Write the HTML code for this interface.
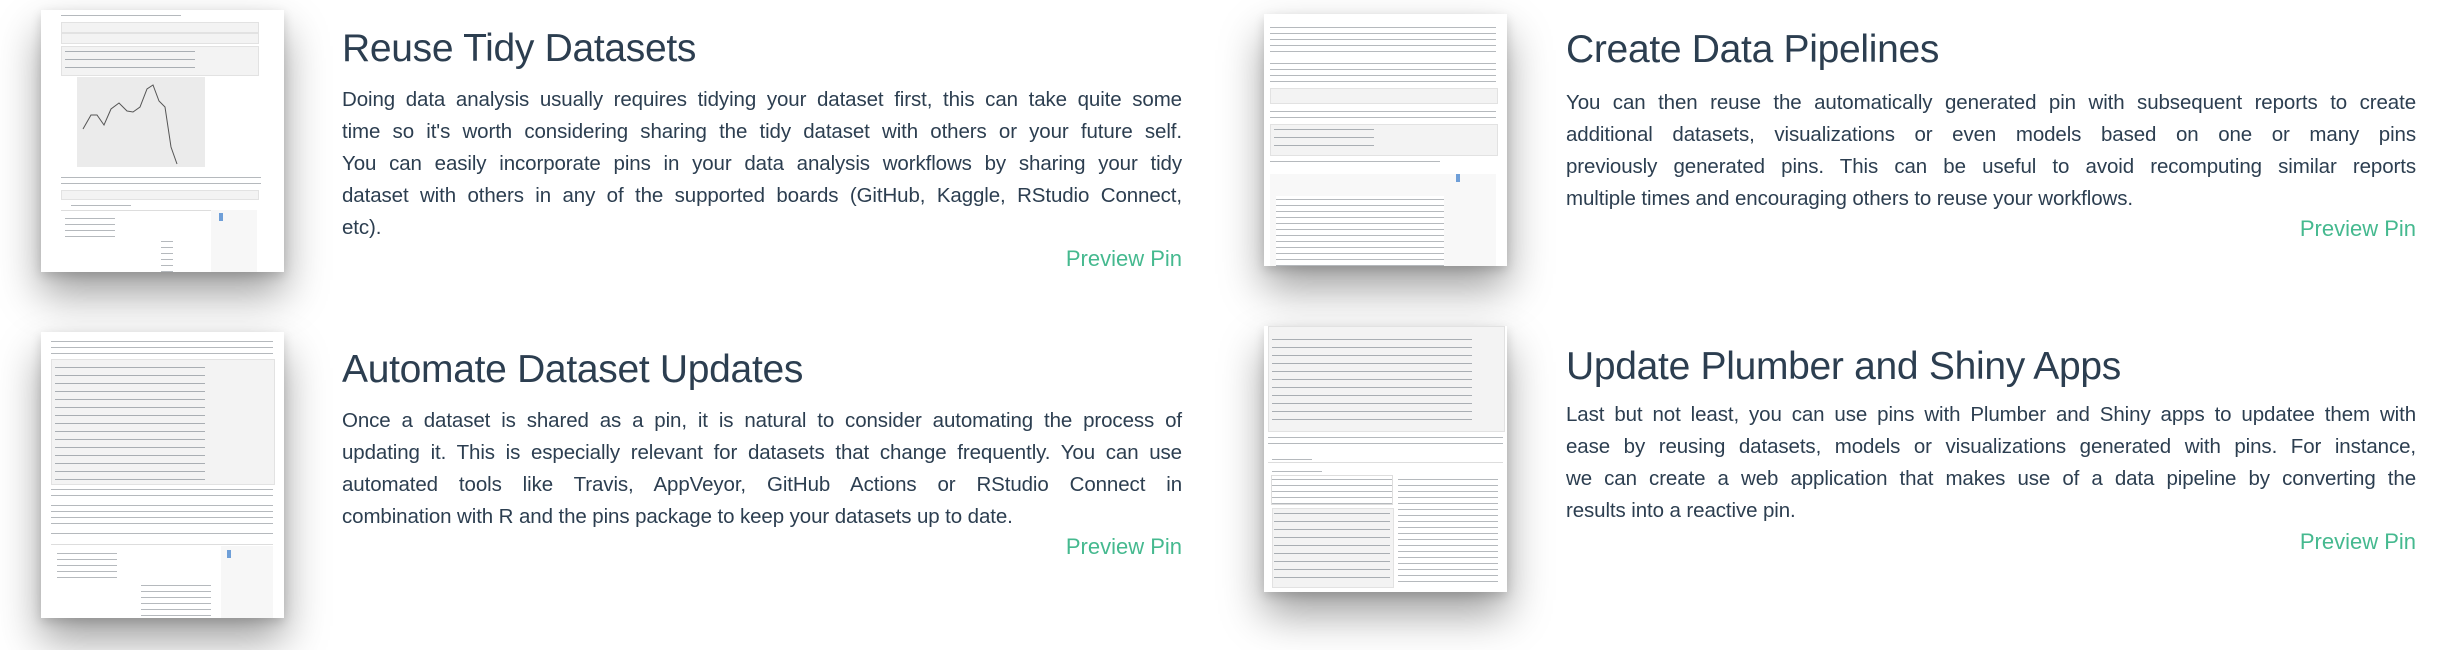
<!DOCTYPE html>
<html><head><meta charset="utf-8"><style>
body{margin:0;width:2461px;height:650px;background:#fff;position:relative;overflow:hidden;font-family:"Liberation Sans",sans-serif;color:#2c3e50}
.shot{position:absolute;background:#fff;box-shadow:0 22px 40px rgba(0,0,0,.38),0 4px 10px rgba(0,0,0,.15);overflow:hidden}
.code{position:absolute;background:#f3f3f3;border:1px solid #e2e2e2}
.lines{position:absolute;background:repeating-linear-gradient(#fff 0 3px,#b5b9bd 3px 4px,#fff 4px 6px)}
.lines2{position:absolute;background:repeating-linear-gradient(#f3f3f3 0 3px,#a9aeb3 3px 4px,#f3f3f3 4px 8px)}
h2{position:absolute;margin:0;font-weight:normal;font-size:39px;line-height:46px;white-space:nowrap;letter-spacing:-0.3px}
.p{position:absolute;font-size:20.5px;line-height:32px;letter-spacing:-0.1px}
.p div{text-align:justify;text-align-last:justify;white-space:nowrap}
.p div.l{text-align-last:left}
.pv{position:absolute;font-size:22px;color:#45b98f;white-space:nowrap;text-align:right}
</style></head><body>

<div class="shot" style="left:41px;top:10px;width:243px;height:262px">
  <div class="lines" style="left:20px;top:2px;width:120px;height:6px"></div>
  <div class="code" style="left:20px;top:12px;width:196px;height:9px"></div>
  <div class="code" style="left:20px;top:23px;width:196px;height:9px"></div>
  <div class="code" style="left:20px;top:36px;width:196px;height:28px"></div>
  <div class="lines2" style="left:24px;top:38px;width:130px;height:24px"></div>
  <div style="position:absolute;left:36px;top:67px;width:128px;height:90px;background:#ebebeb"></div>
  <svg style="position:absolute;left:36px;top:67px" width="128" height="90"><polyline points="6,52 14,38 20,38 27,48 34,32 42,26 50,34 56,35 63,30 70,12 76,8 82,24 88,30 94,70 100,87" fill="none" stroke="#555" stroke-width="1"/></svg>
  <div class="lines" style="left:20px;top:164px;width:200px;height:12px"></div>
  <div class="code" style="left:20px;top:180px;width:196px;height:8px"></div>
  <div class="lines" style="left:30px;top:192px;width:60px;height:5px"></div>
  <div style="position:absolute;left:20px;top:200px;width:196px;height:1px;background:#ddd"></div>
  <div class="lines" style="left:24px;top:205px;width:50px;height:24px"></div>
  <div style="position:absolute;left:170px;top:200px;width:46px;height:62px;background:#f7f7f7"></div>
  <div style="position:absolute;left:178px;top:203px;width:4px;height:8px;background:#6f9fd8"></div>
  <div class="lines" style="left:120px;top:228px;width:12px;height:34px"></div>
</div>
<h2 style="left:342px;top:26px">Reuse Tidy Datasets</h2>
<div class="p" style="left:342px;top:84px;width:840px">
<div>Doing data analysis usually requires tidying your dataset first, this can take quite some</div>
<div>time so it's worth considering sharing the tidy dataset with others or your future self.</div>
<div>You can easily incorporate pins in your data analysis workflows by sharing your tidy</div>
<div>dataset with others in any of the supported boards (GitHub, Kaggle, RStudio Connect,</div>
<div class="l">etc).</div>
</div>
<div class="pv" style="left:1000px;width:182px;top:246px">Preview Pin</div>

<div class="shot" style="left:1264px;top:14px;width:243px;height:252px">
  <div class="lines" style="left:6px;top:10px;width:226px;height:30px"></div>
  <div class="lines" style="left:6px;top:46px;width:226px;height:24px"></div>
  <div class="code" style="left:6px;top:74px;width:226px;height:14px"></div>
  <div class="lines" style="left:6px;top:94px;width:226px;height:12px"></div>
  <div class="code" style="left:6px;top:110px;width:226px;height:30px"></div>
  <div class="lines2" style="left:10px;top:112px;width:100px;height:26px"></div>
  <div class="lines" style="left:6px;top:144px;width:170px;height:6px"></div>
  <div style="position:absolute;left:6px;top:160px;width:226px;height:92px;background:#f8f8f8"></div>
  <div class="lines" style="left:12px;top:182px;width:168px;height:70px"></div>
  <div style="position:absolute;left:192px;top:160px;width:4px;height:8px;background:#6f9fd8"></div>
</div>
<h2 style="left:1566px;top:27px">Create Data Pipelines</h2>
<div class="p" style="left:1566px;top:87px;width:850px">
<div>You can then reuse the automatically generated pin with subsequent reports to create</div>
<div>additional datasets, visualizations or even models based on one or many pins</div>
<div>previously generated pins. This can be useful to avoid recomputing similar reports</div>
<div class="l">multiple times and encouraging others to reuse your workflows.</div>
</div>
<div class="pv" style="left:2200px;width:216px;top:216px">Preview Pin</div>

<div class="shot" style="left:41px;top:332px;width:243px;height:286px">
  <div class="lines" style="left:10px;top:6px;width:222px;height:18px"></div>
  <div class="code" style="left:10px;top:27px;width:222px;height:124px"></div>
  <div class="lines2" style="left:14px;top:32px;width:150px;height:116px"></div>
  <div class="lines" style="left:10px;top:154px;width:222px;height:12px"></div>
  <div class="lines" style="left:10px;top:170px;width:222px;height:24px"></div>
  <div class="lines" style="left:10px;top:198px;width:222px;height:8px"></div>
  <div style="position:absolute;left:10px;top:212px;width:222px;height:1px;background:#ddd"></div>
  <div class="lines" style="left:16px;top:218px;width:60px;height:30px"></div>
  <div class="lines" style="left:100px;top:250px;width:70px;height:36px"></div>
  <div style="position:absolute;left:180px;top:214px;width:52px;height:72px;background:#f7f7f7"></div>
  <div style="position:absolute;left:186px;top:218px;width:4px;height:8px;background:#6f9fd8"></div>
</div>
<h2 style="left:342px;top:347px">Automate Dataset Updates</h2>
<div class="p" style="left:342px;top:405px;width:840px">
<div>Once a dataset is shared as a pin, it is natural to consider automating the process of</div>
<div>updating it. This is especially relevant for datasets that change frequently. You can use</div>
<div>automated tools like Travis, AppVeyor, GitHub Actions or RStudio Connect in</div>
<div class="l">combination with R and the pins package to keep your datasets up to date.</div>
</div>
<div class="pv" style="left:1000px;width:182px;top:534px">Preview Pin</div>

<div class="shot" style="left:1264px;top:326px;width:243px;height:266px">
  <div class="code" style="left:4px;top:0px;width:235px;height:104px"></div>
  <div class="lines2" style="left:8px;top:10px;width:200px;height:90px"></div>
  <div class="lines" style="left:4px;top:108px;width:235px;height:14px"></div>
  <div class="lines" style="left:8px;top:130px;width:40px;height:4px"></div>
  <div style="position:absolute;left:4px;top:136px;width:235px;height:1px;background:#ddd"></div>
  <div class="lines" style="left:8px;top:142px;width:50px;height:6px"></div>
  <div class="lines" style="left:8px;top:150px;width:120px;height:28px;outline:1px solid #ddd"></div>
  <div class="code" style="left:8px;top:182px;width:120px;height:78px"></div>
  <div class="lines2" style="left:10px;top:184px;width:116px;height:74px"></div>
  <div class="lines" style="left:134px;top:150px;width:100px;height:110px"></div>
</div>
<h2 style="left:1566px;top:344px">Update Plumber and Shiny Apps</h2>
<div class="p" style="left:1566px;top:399px;width:850px">
<div>Last but not least, you can use pins with Plumber and Shiny apps to updatee them with</div>
<div>ease by reusing datasets, models or visualizations generated with pins. For instance,</div>
<div>we can create a web application that makes use of a data pipeline by converting the</div>
<div class="l">results into a reactive pin.</div>
</div>
<div class="pv" style="left:2200px;width:216px;top:529px">Preview Pin</div>
</body></html>
